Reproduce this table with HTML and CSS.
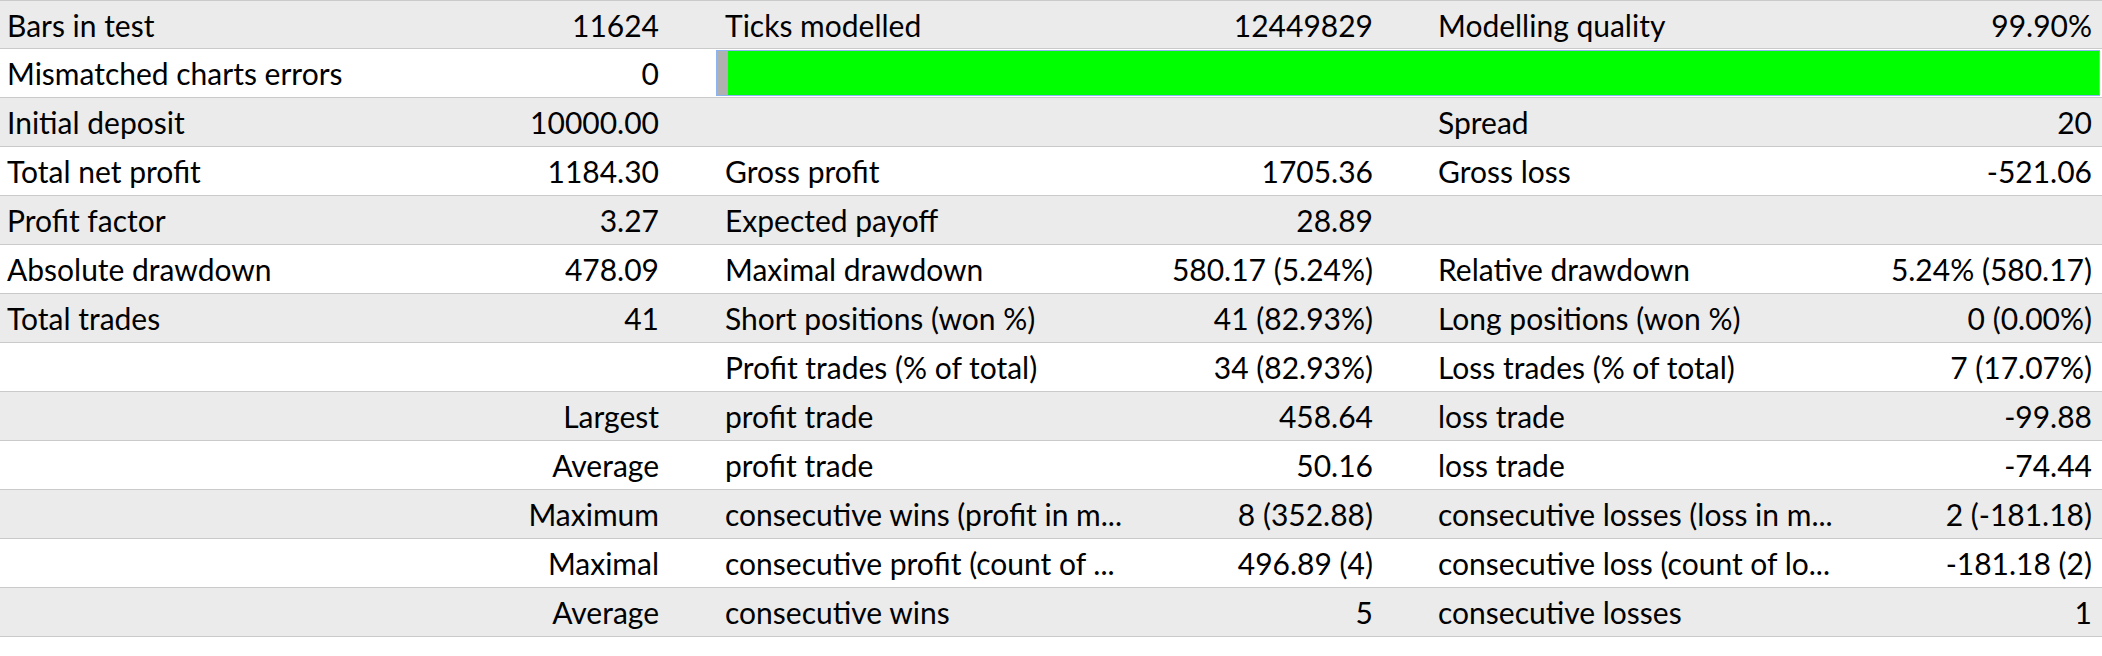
FILE: index.html
```html
<!DOCTYPE html>
<html>
<head>
<meta charset="utf-8">
<title>Strategy Tester Report</title>
<link rel="stylesheet" href="styles.css">
</head>
<body>
<div class="report">
  <div class="row">
    <div class="cell lbl c1">Bars in test</div><div class="cell val v1">11624</div>
    <div class="cell lbl c2">Ticks modelled</div><div class="cell val v2">12449829</div>
    <div class="cell lbl c3">Modelling quality</div><div class="cell val v3">99.90%</div>
  </div>
  <div class="row">
    <div class="cell lbl c1">Mismatched charts errors</div><div class="cell val v1">0</div>
    <div class="bar"><div class="bar-rest"></div><div class="bar-fill"></div></div>
  </div>
  <div class="row">
    <div class="cell lbl c1">Initial deposit</div><div class="cell val v1">10000.00</div>
    <div class="cell lbl c2"></div><div class="cell val v2"></div>
    <div class="cell lbl c3">Spread</div><div class="cell val v3">20</div>
  </div>
  <div class="row">
    <div class="cell lbl c1">Total net profit</div><div class="cell val v1">1184.30</div>
    <div class="cell lbl c2">Gross profit</div><div class="cell val v2">1705.36</div>
    <div class="cell lbl c3">Gross loss</div><div class="cell val v3">-521.06</div>
  </div>
  <div class="row">
    <div class="cell lbl c1">Profit factor</div><div class="cell val v1">3.27</div>
    <div class="cell lbl c2">Expected payoff</div><div class="cell val v2">28.89</div>
    <div class="cell lbl c3"></div><div class="cell val v3"></div>
  </div>
  <div class="row">
    <div class="cell lbl c1">Absolute drawdown</div><div class="cell val v1">478.09</div>
    <div class="cell lbl c2">Maximal drawdown</div><div class="cell val v2">580.17 (5.24%)</div>
    <div class="cell lbl c3">Relative drawdown</div><div class="cell val v3">5.24% (580.17)</div>
  </div>
  <div class="row">
    <div class="cell lbl c1">Total trades</div><div class="cell val v1">41</div>
    <div class="cell lbl c2">Short positions (won %)</div><div class="cell val v2">41 (82.93%)</div>
    <div class="cell lbl c3">Long positions (won %)</div><div class="cell val v3">0 (0.00%)</div>
  </div>
  <div class="row">
    <div class="cell lbl c1"></div><div class="cell val v1"></div>
    <div class="cell lbl c2">Profit trades (% of total)</div><div class="cell val v2">34 (82.93%)</div>
    <div class="cell lbl c3">Loss trades (% of total)</div><div class="cell val v3">7 (17.07%)</div>
  </div>
  <div class="row">
    <div class="cell lbl c1"></div><div class="cell val v1">Largest</div>
    <div class="cell lbl c2">profit trade</div><div class="cell val v2">458.64</div>
    <div class="cell lbl c3">loss trade</div><div class="cell val v3">-99.88</div>
  </div>
  <div class="row">
    <div class="cell lbl c1"></div><div class="cell val v1">Average</div>
    <div class="cell lbl c2">profit trade</div><div class="cell val v2">50.16</div>
    <div class="cell lbl c3">loss trade</div><div class="cell val v3">-74.44</div>
  </div>
  <div class="row">
    <div class="cell lbl c1"></div><div class="cell val v1">Maximum</div>
    <div class="cell lbl c2">consecutive wins (profit in m...</div><div class="cell val v2">8 (352.88)</div>
    <div class="cell lbl c3">consecutive losses (loss in m...</div><div class="cell val v3">2 (-181.18)</div>
  </div>
  <div class="row">
    <div class="cell lbl c1"></div><div class="cell val v1">Maximal</div>
    <div class="cell lbl c2">consecutive profit (count of ...</div><div class="cell val v2">496.89 (4)</div>
    <div class="cell lbl c3">consecutive loss (count of lo...</div><div class="cell val v3">-181.18 (2)</div>
  </div>
  <div class="row">
    <div class="cell lbl c1"></div><div class="cell val v1">Average</div>
    <div class="cell lbl c2">consecutive wins</div><div class="cell val v2">5</div>
    <div class="cell lbl c3">consecutive losses</div><div class="cell val v3">1</div>
  </div>
</div>
</body>
</html>
```
FILE: styles.css
```css
html, body {
  margin: 0;
  padding: 0;
  background: #ffffff;
}

body {
  font-family: "Lato", "Noto Sans", sans-serif;
  font-size: 30px;
  color: #000000;
}

.report {
  width: 2102px;
  border-top: 1px solid #cacaca;
}

.row {
  display: grid;
  grid-template-columns: 430px 286px 430px 282px 430px 244px;
  height: 48px;
  border-bottom: 1px solid #cacaca;
  background: #ffffff;
}

.row:nth-child(odd) {
  background: #ebebeb;
}

.row:first-child {
  height: 47px;
}

.cell {
  line-height: 48px;
  white-space: nowrap;
  overflow: hidden;
}

.lbl.c1 { padding-left: 7px; }
.lbl.c2 { padding-left: 9px; }
.lbl.c3 { padding-left: 10px; }

.val { text-align: right; }
.val.v1 { padding-right: 57px; }
.val.v2 { padding-right: 55px; }
.val.v3 { padding-right: 10px; }

.bar {
  grid-column: 3 / 7;
  display: flex;
  margin: 1px 2px 1px 0;
  border: 1px solid #8db4ee;
}

.bar-rest {
  width: 11px;
  background: #b0b0b0;
}

.bar-fill {
  flex: 1;
  background: #00ff00;
}
```
